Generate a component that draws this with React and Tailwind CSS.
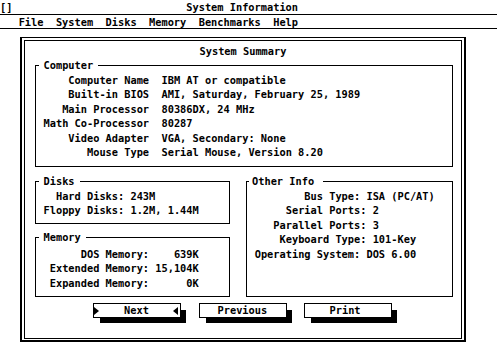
import React from "react";

const computerLines = [
  "    Computer Name  IBM AT or compatible",
  "    Built-in BIOS  AMI, Saturday, February 25, 1989",
  "   Main Processor  80386DX, 24 MHz",
  "Math Co-Processor  80287",
  "    Video Adapter  VGA, Secondary: None",
  "       Mouse Type  Serial Mouse, Version 8.20",
];

const diskLines = ["  Hard Disks: 243M", "Floppy Disks: 1.2M, 1.44M"];

const memoryLines = [
  "      DOS Memory:    639K",
  " Extended Memory: 15,104K",
  " Expanded Memory:      0K",
];

const otherLines = [
  "        Bus Type: ISA (PC/AT)",
  "     Serial Ports: 2",
  "   Parallel Ports: 3",
  "    Keyboard Type: 101-Key",
  "Operating System: DOS 6.00",
  " ",
  " ",
];

function Lines({ lines }) {
  return (
    <div className="flex flex-col">
      {lines.map((l, i) => (
        <div key={i} className="h-[14.5px] leading-[14.5px]">
          {l}
        </div>
      ))}
    </div>
  );
}

function RightTri() {
  return (
    <svg width="5" height="8" viewBox="0 0 5 8" className="block">
      <polygon points="0,0 5,4 0,8" fill="#000" />
    </svg>
  );
}

function LeftTri() {
  return (
    <svg width="5" height="8" viewBox="0 0 5 8" className="block">
      <polygon points="5,0 0,4 5,8" fill="#000" />
    </svg>
  );
}

export default function App() {
  return (
    <div className="w-[497px] h-[362px] overflow-hidden bg-white text-black font-['DejaVu_Sans_Mono','Liberation_Mono',monospace] text-[10.32px] font-bold whitespace-pre">
      <div className="h-[14px] leading-[14px]">{"[]                            System Information"}</div>
      <div className="h-[15px] border-y border-black leading-[14px]">
        {"   File  System  Disks  Memory  Benchmarks  Help"}
      </div>

      <div className="ml-[20px] mt-[8px] w-[446px] h-[305px] border-t border-x-2 border-b-2 border-black p-[2px] pb-[1px] flex">
        <div className="flex-1 border border-black flex flex-col">
          <div className="mt-[2.5px] h-[14.5px] leading-[14.5px] text-center">System Summary</div>

          <fieldset className="ml-[10px] w-[418px] border border-black pl-[7.5px] pb-[6.5px] leading-[14.5px]">
            <legend className="-ml-[5px] px-[5px] h-[14.5px] leading-[14.5px]">Computer</legend>
            <Lines lines={computerLines} />
          </fieldset>

          <div className="mt-[7px] ml-[10px] flex gap-[16px]">
            <div className="w-[195px] flex flex-col">
              <fieldset className="border border-black pl-[7.5px] pb-[5px]">
                <legend className="-ml-[5px] px-[5px] h-[14.5px] leading-[14.5px]">Disks</legend>
                <Lines lines={diskLines} />
              </fieldset>
              <fieldset className="mt-[6.5px] border border-black pl-[7.5px] pt-[2px] pb-[6px]">
                <legend className="-ml-[5px] px-[5px] h-[14.5px] leading-[14.5px]">Memory</legend>
                <Lines lines={memoryLines} />
              </fieldset>
            </div>
            <fieldset className="w-[207px] border border-black pl-[7.7px] pb-[6px]">
              <legend className="-ml-[5.7px] pl-[3px] pr-[9px] h-[14.5px] leading-[14.5px]">Other Info</legend>
              <Lines lines={otherLines} />
            </fieldset>
          </div>

          <div className="mt-[6px] ml-[68px] flex">
            <div className="w-[88px] h-[15px] border border-black bg-white shadow-[6px_6px_0_-1px_#000] flex items-center leading-[13px]">
              <RightTri />
              <span className="ml-[25px]">Next</span>
              <span className="flex-1" />
              <LeftTri />
              <span className="w-[2px]" />
            </div>
            <div className="ml-[18px] w-[88px] h-[15px] border border-black bg-white shadow-[6px_6px_0_-1px_#000] leading-[13px] pl-[17.5px]">
              Previous
            </div>
            <div className="ml-[17px] w-[88px] h-[15px] border border-black bg-white shadow-[6px_6px_0_-1px_#000] leading-[13px] pl-[24.5px]">
              Print
            </div>
          </div>
        </div>
      </div>
    </div>
  );
}
